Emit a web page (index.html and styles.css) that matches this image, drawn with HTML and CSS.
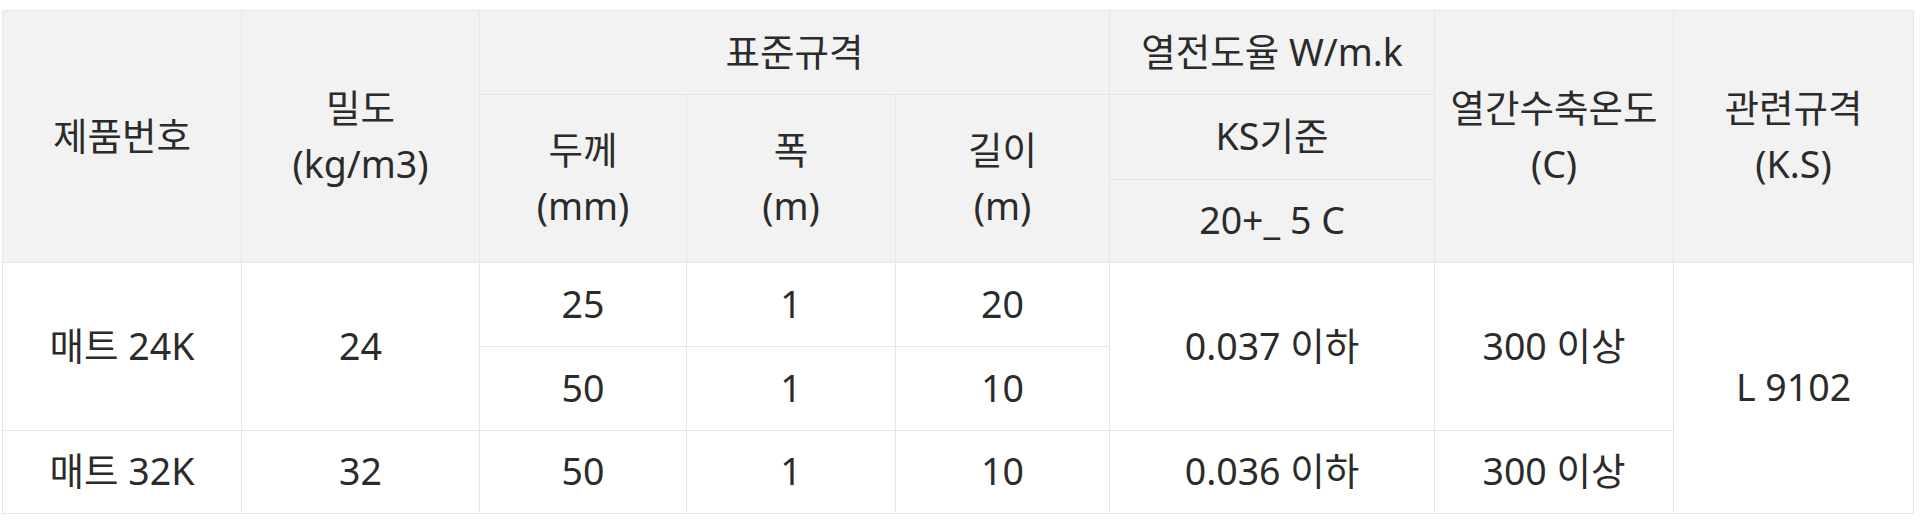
FILE: index.html
```html
<!DOCTYPE html>
<html lang="ko">
<head>
<meta charset="utf-8">
<title>제품 규격</title>
<link rel="stylesheet" href="styles.css">
</head>
<body>
<table class="spec">
  <colgroup>
    <col class="c1"><col class="c2"><col class="c3"><col class="c4"><col class="c5"><col class="c6"><col class="c7"><col class="c8">
  </colgroup>
  <thead>
    <tr class="r1">
      <th rowspan="3">제품번호</th>
      <th rowspan="3">밀도<br>(kg/m3)</th>
      <th colspan="3">표준규격</th>
      <th>열전도율 W/m.k</th>
      <th rowspan="3">열간수축온도<br>(C)</th>
      <th rowspan="3">관련규격<br>(K.S)</th>
    </tr>
    <tr class="r2">
      <th rowspan="2">두께<br>(mm)</th>
      <th rowspan="2">폭<br>(m)</th>
      <th rowspan="2">길이<br>(m)</th>
      <th>KS기준</th>
    </tr>
    <tr class="r3">
      <th>20+_ 5 C</th>
    </tr>
  </thead>
  <tbody>
    <tr class="r4">
      <td rowspan="2">매트 24K</td>
      <td rowspan="2">24</td>
      <td>25</td>
      <td>1</td>
      <td>20</td>
      <td rowspan="2">0.037 이하</td>
      <td rowspan="2">300 이상</td>
      <td rowspan="3">L 9102</td>
    </tr>
    <tr class="r5">
      <td>50</td>
      <td>1</td>
      <td>10</td>
    </tr>
    <tr class="r6">
      <td>매트 32K</td>
      <td>32</td>
      <td>50</td>
      <td>1</td>
      <td>10</td>
      <td>0.036 이하</td>
      <td>300 이상</td>
    </tr>
  </tbody>
</table>
</body>
</html>
```

FILE: styles.css
```css
html, body {
  margin: 0;
  padding: 0;
  background: #ffffff;
}

body {
  padding: 10px 0 0 2px;
  font-family: "Noto Sans", "Noto Sans CJK KR", sans-serif;
  color: #2b2b2b;
}

.spec {
  border-collapse: collapse;
  table-layout: fixed;
  width: 1912px;
  font-size: 37.5px;
  line-height: 56px;
}

.c1 { width: 239px; }
.c2 { width: 238px; }
.c3 { width: 207px; }
.c4 { width: 209px; }
.c5 { width: 214px; }
.c6 { width: 325px; }
.c7 { width: 239px; }
.c8 { width: 240px; }

.spec th,
.spec td {
  border: 1px solid #e6e6e6;
  padding: 0 0 2px;
  text-align: center;
  vertical-align: middle;
  font-weight: 400;
}

.spec th {
  background: #f2f2f2;
}

.spec td {
  background: #ffffff;
}

.r1 { height: 84px; }
.r2 { height: 85px; }
.r3 { height: 83px; }
.r4 { height: 84px; }
.r5 { height: 84px; }
.r6 { height: 83px; }
```
